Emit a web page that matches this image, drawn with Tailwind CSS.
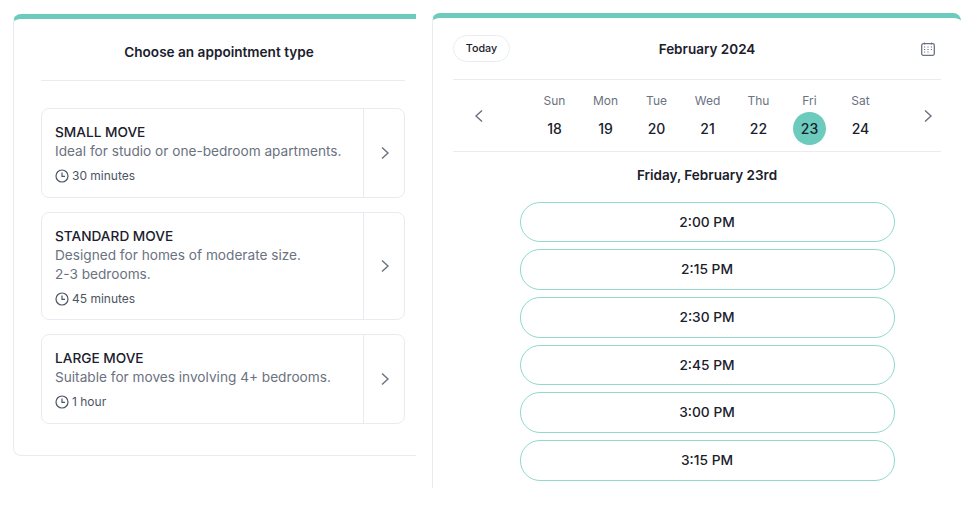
<!DOCTYPE html>
<html lang="en">
<head>
    <meta charset="UTF-8">
    <title>Appointment</title>
    <script src="https://cdn.jsdelivr.net/npm/@tailwindcss/browser@4"></script>
</head>
<body class="w-[969px] h-[512px] bg-white overflow-hidden font-['Inter',sans-serif] text-[#1a202c]">
<div class="flex items-start">

    <!-- appointment types -->
    <section class="ml-[13px] mt-[14px] w-[403px] h-[442px] border-l border-b border-[#e8ecf1] border-t-[5px] border-t-[#6ccbbd] rounded-tl-lg rounded-bl-lg pl-[27px] pr-[11px]">
        <h2 class="h-[62px] pt-[5px] pr-[8px] flex items-center justify-center text-[13.6px] font-semibold border-b border-[#e8ecf1]">Choose an appointment type</h2>

        <div class="mt-[27px] flex flex-col gap-[14px]">
            <div class="flex h-[90px] border border-[#e8ecf1] rounded-lg">
                <div class="flex-1 pl-[13px] pt-[14px]">
                    <div class="text-[13.65px] leading-[18px] font-medium">SMALL MOVE</div>
                    <div class="mt-[1px] text-[13.65px] leading-[19px] text-[#6b7280]">Ideal for studio or one-bedroom apartments.</div>
                    <div class="mt-[6px] flex items-center gap-[3px] text-[12px] leading-[18px] text-[#4b5563]">
                        <svg class="w-[14px] h-[14px]" viewBox="0 0 14 14" fill="none" stroke="#4b5563" stroke-width="1.2"><circle cx="7" cy="7" r="6"/><path d="M7 3.5V7.3H10"/></svg>
                        30 minutes
                    </div>
                </div>
                <div class="w-[41px] pl-[2px] flex items-center justify-center border-l border-[#e8ecf1]">
                    <svg class="w-[10px] h-[14px]" viewBox="0 0 10 14" fill="none" stroke="#6b7280" stroke-width="1.4"><path d="M2 1.5L8 7L2 12.5"/></svg>
                </div>
            </div>

            <div class="flex h-[108px] border border-[#e8ecf1] rounded-lg">
                <div class="flex-1 pl-[13px] pt-[14px]">
                    <div class="text-[13.65px] leading-[18px] font-medium">STANDARD MOVE</div>
                    <div class="mt-[1px] text-[13.65px] leading-[19px] text-[#6b7280]">Designed for homes of moderate size.<br>2-3 bedrooms.</div>
                    <div class="mt-[6px] flex items-center gap-[3px] text-[12px] leading-[18px] text-[#4b5563]">
                        <svg class="w-[14px] h-[14px]" viewBox="0 0 14 14" fill="none" stroke="#4b5563" stroke-width="1.2"><circle cx="7" cy="7" r="6"/><path d="M7 3.5V7.3H10"/></svg>
                        45 minutes
                    </div>
                </div>
                <div class="w-[41px] pl-[2px] flex items-center justify-center border-l border-[#e8ecf1]">
                    <svg class="w-[10px] h-[14px]" viewBox="0 0 10 14" fill="none" stroke="#6b7280" stroke-width="1.4"><path d="M2 1.5L8 7L2 12.5"/></svg>
                </div>
            </div>

            <div class="flex h-[90px] border border-[#e8ecf1] rounded-lg">
                <div class="flex-1 pl-[13px] pt-[14px]">
                    <div class="text-[13.65px] leading-[18px] font-medium">LARGE MOVE</div>
                    <div class="mt-[1px] text-[13.65px] leading-[19px] text-[#6b7280]">Suitable for moves involving 4+ bedrooms.</div>
                    <div class="mt-[6px] flex items-center gap-[3px] text-[12px] leading-[18px] text-[#4b5563]">
                        <svg class="w-[14px] h-[14px]" viewBox="0 0 14 14" fill="none" stroke="#4b5563" stroke-width="1.2"><circle cx="7" cy="7" r="6"/><path d="M7 3.5V7.3H10"/></svg>
                        1 hour
                    </div>
                </div>
                <div class="w-[41px] pl-[2px] flex items-center justify-center border-l border-[#e8ecf1]">
                    <svg class="w-[10px] h-[14px]" viewBox="0 0 10 14" fill="none" stroke="#6b7280" stroke-width="1.4"><path d="M2 1.5L8 7L2 12.5"/></svg>
                </div>
            </div>
        </div>
    </section>

    <!-- calendar -->
    <section class="ml-[16px] mt-[13px] w-[529px] h-[475px] overflow-hidden border-l border-[#e8ecf1] border-t-[5px] border-t-[#6ccbbd] rounded-t-lg pl-[20px]">
        <div class="h-[61px] flex items-center">
            <div class="w-[57px] h-[27px] pt-[2px] flex items-center justify-center border border-[#e8ecf1] rounded-full text-[10.75px] font-medium">Today</div>
            <div class="flex-1 pt-[2px] text-center text-[13.5px] font-semibold">February 2024</div>
            <div class="w-[57px] pl-[17px]">
                <svg class="w-[14px] h-[14px]" viewBox="0 0 14 14" fill="none" stroke="#6b7280"><rect x="0.7" y="1.7" width="12.6" height="11.6" rx="1.5" stroke-width="1.3"/><path d="M3.5 0.5V2.5M10.5 0.5V2.5" stroke-width="1"/><path d="M3 5H4.2M6.4 5H7.6M9.8 5H11M3 7.5H4.2M6.4 7.5H7.6M9.8 7.5H11M3 10H4.2M6.4 10H7.6" stroke-width="1"/></svg>
            </div>
        </div>

        <div class="mr-[20px] h-[73px] flex items-center border-y border-[#e8ecf1]">
            <div class="w-[76px] pl-[21px]">
                <svg class="w-[10px] h-[14px]" viewBox="0 0 10 14" fill="none" stroke="#6b7280" stroke-width="1.4"><path d="M8 1.5L2 7L8 12.5"/></svg>
            </div>
            <div class="mt-[5px] grid grid-cols-7 w-[357px] text-center">
                <div><div class="text-[12px] leading-[18px] text-[#6b7280]">Sun</div><div class="mt-[2px] h-[33px] flex items-center justify-center text-[14px] font-medium">18</div></div>
                <div><div class="text-[12px] leading-[18px] text-[#6b7280]">Mon</div><div class="mt-[2px] h-[33px] flex items-center justify-center text-[14px] font-medium">19</div></div>
                <div><div class="text-[12px] leading-[18px] text-[#6b7280]">Tue</div><div class="mt-[2px] h-[33px] flex items-center justify-center text-[14px] font-medium">20</div></div>
                <div><div class="text-[12px] leading-[18px] text-[#6b7280]">Wed</div><div class="mt-[2px] h-[33px] flex items-center justify-center text-[14px] font-medium">21</div></div>
                <div><div class="text-[12px] leading-[18px] text-[#6b7280]">Thu</div><div class="mt-[2px] h-[33px] flex items-center justify-center text-[14px] font-medium">22</div></div>
                <div><div class="text-[12px] leading-[18px] text-[#6b7280]">Fri</div><div class="mt-[2px] w-[33px] h-[33px] mx-auto rounded-full bg-[#6ccbbd] flex items-center justify-center text-[14px] font-medium">23</div></div>
                <div><div class="text-[12px] leading-[18px] text-[#6b7280]">Sat</div><div class="mt-[2px] h-[33px] flex items-center justify-center text-[14px] font-medium">24</div></div>
            </div>
            <div class="flex-1 pl-[37px]">
                <svg class="w-[10px] h-[14px]" viewBox="0 0 10 14" fill="none" stroke="#6b7280" stroke-width="1.4"><path d="M2 1.5L8 7L2 12.5"/></svg>
            </div>
        </div>

        <div class="mt-[14px] text-center text-[13.5px] leading-[18px] font-semibold">Friday, February 23rd</div>

        <div class="mt-[17.75px] w-[375px] mx-auto flex flex-col gap-[7px] text-[13.75px] font-medium">
            <div class="h-[40.67px] flex items-center justify-center border border-[#8fd9cd] rounded-[20px]">2:00 PM</div>
            <div class="h-[40.67px] flex items-center justify-center border border-[#8fd9cd] rounded-[20px]">2:15 PM</div>
            <div class="h-[40.67px] flex items-center justify-center border border-[#8fd9cd] rounded-[20px]">2:30 PM</div>
            <div class="h-[40.67px] flex items-center justify-center border border-[#8fd9cd] rounded-[20px]">2:45 PM</div>
            <div class="h-[40.67px] flex items-center justify-center border border-[#8fd9cd] rounded-[20px]">3:00 PM</div>
            <div class="h-[40.67px] flex items-center justify-center border border-[#8fd9cd] rounded-[20px]">3:15 PM</div>
            <div class="h-[40.67px] border border-[#8fd9cd] rounded-[20px]"></div>
        </div>
    </section>
</div>
</body>
</html>
